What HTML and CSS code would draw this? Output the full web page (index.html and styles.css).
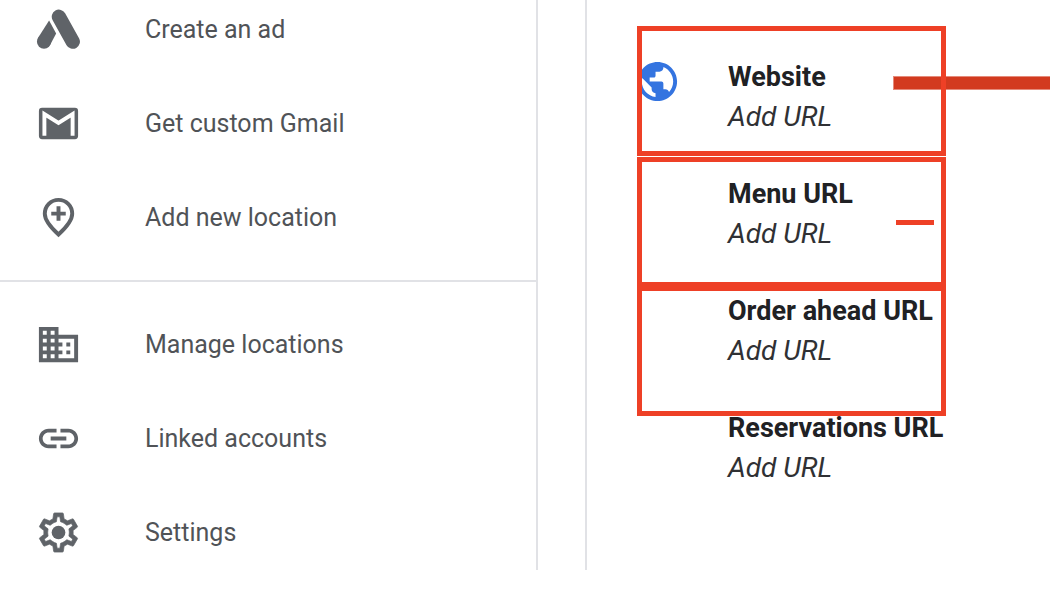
FILE: index.html
```html
<!DOCTYPE html>
<html lang="en">
<head>
    <meta charset="UTF-8">
    <meta name="viewport" content="width=device-width, initial-scale=1.0">
    <title>Business info</title>
    <link rel="stylesheet" href="styles.css">
</head>
<body>
    <div class="page">
        <nav class="sidebar">
            <ul class="menu">
                <li><a href="#ad">
                    <svg class="icon" viewBox="0 0 24 24"><path d="M7.2 7.4L10.8 14.1L7.7 19.9A3.6 3.6 0 0 1 1.5 16.4Z"/><circle cx="4.6" cy="18.2" r="3.6"/><path d="M12.2 5.5L19.3 18.2" fill="none" stroke="currentColor" stroke-width="7.3" stroke-linecap="round"/></svg>
                    <span>Create an ad</span>
                </a></li>
                <li><a href="#gmail">
                    <svg class="icon" viewBox="0 0 24 24"><rect x="2" y="4" width="20" height="16" rx="1.6"/><path d="M4.8 18.3V7.2L12 11.7L19.2 7.2V18.3" fill="none" stroke="#fff" stroke-width="2"/></svg>
                    <span>Get custom Gmail</span>
                </a></li>
                <li><a href="#new">
                    <svg class="icon" viewBox="0 0 24 24"><path d="M12 3C8.1 3 5 6 5 10.1C5 13.2 7.5 16.6 12 20.7C16.5 16.6 19 13.2 19 10.1C19 6 15.9 3 12 3ZM12 6.3V13.7M8.3 10H15.7" fill="none" stroke="currentColor" stroke-width="2"/></svg>
                    <span>Add new location</span>
                </a></li>
            </ul>
            <ul class="menu">
                <li><a href="#manage">
                    <svg class="icon" viewBox="0 0 24 24"><path d="M12 7V3H2v18h20V7H12zM6 19H4v-2h2v2zm0-4H4v-2h2v2zm0-4H4V9h2v2zm0-4H4V5h2v2zm4 12H8v-2h2v2zm0-4H8v-2h2v2zm0-4H8V9h2v2zm0-4H8V5h2v2zm10 12h-8v-2h2v-2h-2v-2h2v-2h-2V9h8v10zm-2-8h-2v2h2v-2zm0 4h-2v2h2v-2z"/></svg>
                    <span>Manage locations</span>
                </a></li>
                <li><a href="#linked">
                    <svg class="icon" viewBox="0 0 24 24"><path d="M3.9 12c0-1.71 1.39-3.1 3.1-3.1h4V7H7c-2.76 0-5 2.24-5 5s2.24 5 5 5h4v-1.9H7c-1.71 0-3.1-1.39-3.1-3.1zM8 13h8v-2H8v2zm9-6h-4v1.9h4c1.71 0 3.1 1.39 3.1 3.1s-1.39 3.1-3.1 3.1h-4V17h4c2.76 0 5-2.24 5-5s-2.24-5-5-5z"/></svg>
                    <span>Linked accounts</span>
                </a></li>
                <li><a href="#settings">
                    <svg class="icon" viewBox="0 0 24 24"><path stroke="currentColor" stroke-width=".35" stroke-linejoin="round" d="M19.43 12.98c.04-.32.07-.64.07-.98 0-.34-.03-.66-.07-.98l2.11-1.65c.19-.15.24-.42.12-.64l-2-3.46c-.09-.16-.26-.25-.44-.25-.06 0-.12.01-.17.03l-2.49 1c-.52-.4-1.08-.73-1.69-.98l-.38-2.65C14.46 2.18 14.25 2 14 2h-4c-.25 0-.46.18-.49.42l-.38 2.65c-.61.25-1.17.59-1.69.98l-2.49-1c-.06-.02-.12-.03-.18-.03-.17 0-.34.09-.43.25l-2 3.46c-.13.22-.07.49.12.64l2.11 1.65c-.04.32-.07.65-.07.98 0 .33.03.66.07.98l-2.11 1.65c-.19.15-.24.42-.12.64l2 3.46c.09.16.26.25.44.25.06 0 .12-.01.17-.03l2.49-1c.52.4 1.08.73 1.69.98l.38 2.65c.03.24.24.42.49.42h4c.25 0 .46-.18.49-.42l.38-2.65c.61-.25 1.17-.59 1.69-.98l2.49 1c.06.02.12.03.18.03.17 0 .34-.09.43-.25l2-3.46c.12-.22.07-.49-.12-.64l-2.11-1.65zm-1.98-1.71c.04.31.05.52.05.73 0 .21-.02.43-.05.73l-.14 1.13.89.7 1.08.84-.7 1.21-1.27-.51-1.04-.42-.9.68c-.43.32-.84.56-1.25.73l-1.06.43-.16 1.13-.2 1.35h-1.4l-.19-1.35-.16-1.13-1.06-.43c-.43-.18-.83-.41-1.23-.71l-.91-.7-1.06.43-1.27.51-.7-1.21 1.08-.84.89-.7-.14-1.13c-.03-.31-.05-.54-.05-.74s.02-.43.05-.73l.14-1.13-.89-.7-1.08-.84.7-1.21 1.27.51 1.04.42.9-.68c.43-.32.84-.56 1.25-.73l1.06-.43.16-1.13.2-1.35h1.39l.19 1.35.16 1.13 1.06.43c.43.18.83.41 1.23.71l.91.7 1.06-.43 1.27-.51.7 1.21-1.07.85-.89.7.14 1.13z"/><circle cx="12" cy="12" r="3.5"/></svg>
                    <span>Settings</span>
                </a></li>
            </ul>
        </nav>

        <main class="info">
            <svg class="icon globe" viewBox="0 0 24 24"><path d="M12 2C6.48 2 2 6.48 2 12s4.48 10 10 10 10-4.48 10-10S17.52 2 12 2zm-1 17.93c-3.95-.49-7-3.85-7-7.93 0-.62.08-1.21.21-1.79L9 15v1c0 1.1.9 2 2 2v1.93zm6.9-2.54c-.26-.81-1-1.39-1.9-1.39h-1v-3c0-.55-.45-1-1-1H8v-2h2c.55 0 1-.45 1-1V7h2c1.1 0 2-.9 2-2v-.41c2.93 1.19 5 4.06 5 7.41 0 2.08-.8 3.97-2.1 5.39z"/></svg>
            <div class="links">
                <section>
                    <h2>Website</h2>
                    <button type="button">Add URL</button>
                </section>
                <section>
                    <h2>Menu URL</h2>
                    <button type="button">Add URL</button>
                </section>
                <section>
                    <h2>Order ahead URL</h2>
                    <button type="button">Add URL</button>
                </section>
                <section>
                    <h2>Reservations URL</h2>
                    <button type="button">Add URL</button>
                </section>
            </div>

            <!-- red marks over the list -->
            <div class="mark arrow"></div>
            <div class="mark box box-website"></div>
            <div class="mark box box-menu"></div>
            <div class="mark box box-order"></div>
            <div class="mark dash"></div>
        </main>
    </div>
</body>
</html>
```
FILE: styles.css
```css
* {
    box-sizing: border-box;
}
body {
    margin: 0;
    background: #fff;
    font-family: Roboto, Arial, sans-serif;
    color: #202124;
}
.page {
    display: grid;
    grid-template-columns: 538px 1fr;
    column-gap: 47px;
}
.sidebar {
    border-right: 2px solid #e1e2e6;
    padding: 5px 0 14px;
}
.menu {
    list-style: none;
    margin: 0;
    padding: 0;
    display: grid;
    row-gap: 46px;
}
.menu + .menu {
    margin-top: 39px;
    padding-top: 38px;
    border-top: 2px solid #e1e2e6;
}
.menu a {
    display: flex;
    align-items: center;
    gap: 63px;
    height: 48px;
    padding-left: 35px;
    font-size: 25px;
    color: #505357;
    text-decoration: none;
}
.icon {
    width: 47px;
    height: 47px;
    flex: none;
    fill: currentColor;
    color: #5f6368;
}
.info {
    position: relative;
    display: flex;
    align-items: flex-start;
    gap: 47px;
    border-left: 2px solid #e1e2e6;
    padding: 58px 0 0 47px;
    overflow: hidden;
}
.globe {
    color: #3474e0;
}
.links {
    display: grid;
    row-gap: 39px;
}
.links h2 {
    margin: 0;
    font-size: 27px;
    font-weight: 700;
    line-height: 39px;
    white-space: nowrap;
}
.links button {
    display: block;
    padding: 0;
    border: none;
    background: none;
    font: italic 28px/39px Roboto, Arial, sans-serif;
    color: #303134;
    cursor: pointer;
}
.mark {
    position: absolute;
    pointer-events: none;
}
.box {
    left: 50px;
    width: 309px;
    height: 130px;
    border: 5px solid #ee4026;
}
.box-website {
    top: 26px;
}
.box-menu {
    top: 157px;
}
.box-order {
    top: 286px;
}
.arrow {
    top: 76px;
    left: 306px;
    right: 0;
    height: 14px;
    background: #d23a1f;
    border: 1px solid #e58a7a;
    border-right: none;
}
.dash {
    top: 220px;
    left: 309px;
    width: 38px;
    height: 5px;
    background: #ee4026;
}
```
